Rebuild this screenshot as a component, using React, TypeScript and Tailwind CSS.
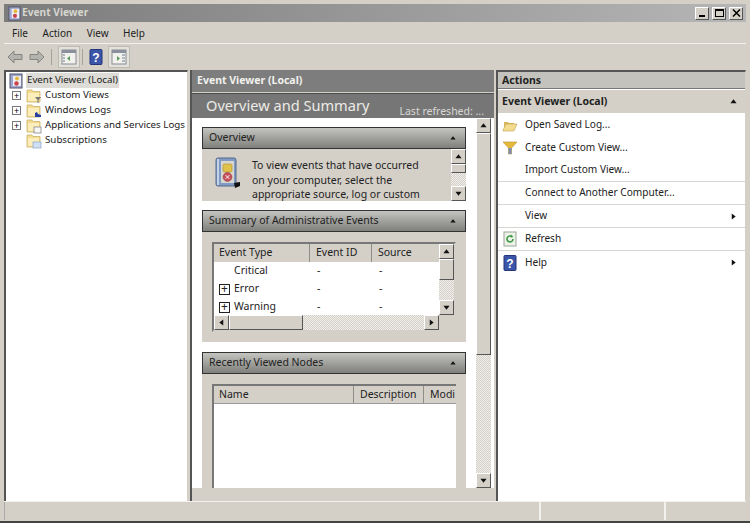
import React from "react";

const FONT = "font-['Noto_Sans','DejaVu_Sans',sans-serif]";
const BEVEL = "border border-t-white border-l-white border-r-[#555] border-b-[#555] bg-[#d4d0c8]";
const TRACK = "bg-[repeating-conic-gradient(#d4d0c8_0%_25%,#efeeea_0%_50%)] bg-size-[2px_2px]";

function Arrow({ dir, size = 7 }: { dir: "up" | "down" | "left" | "right"; size?: number }) {
  const pts = {
    up: "4,1.5 7.5,6 0.5,6",
    down: "0.5,2 7.5,2 4,6.5",
    left: "6,0.5 6,7.5 1.5,4",
    right: "2,0.5 2,7.5 6.5,4",
  }[dir];
  return (
    <svg width={size} height={size} viewBox="0 0 8 8" className="shrink-0">
      <polygon points={pts} fill="#111" />
    </svg>
  );
}

function ScrollBtn({ dir }: { dir: "up" | "down" | "left" | "right" }) {
  return (
    <div className={`w-[15px] h-[15px] shrink-0 flex items-center justify-center ${BEVEL}`}>
      <Arrow dir={dir} />
    </div>
  );
}

function VScroll({ thumb }: { thumb: number }) {
  return (
    <div className="w-[15px] h-full shrink-0 flex flex-col">
      <ScrollBtn dir="up" />
      <div className={`shrink-0 ${BEVEL}`} style={{ height: thumb }} />
      <div className={`flex-1 ${TRACK}`} />
      <ScrollBtn dir="down" />
    </div>
  );
}

function FolderIcon({ badge }: { badge?: React.ReactNode }) {
  return (
    <svg width="17" height="16" viewBox="0 0 17 16" className="shrink-0">
      <path d="M1 2h5l1 1.5h7v10.5H1z" fill="#f3dc8f" stroke="#c9b26a" strokeWidth="0.8" />
      <rect x="2" y="5" width="11" height="8" fill="#fbeebb" />
      {badge}
    </svg>
  );
}

function LogIcon({ size = 16 }: { size?: number }) {
  return (
    <svg width={size} height={size} viewBox="0 0 16 16" className="shrink-0">
      <rect x="2" y="1" width="12" height="14" fill="#9fa6cf" stroke="#55556b" strokeWidth="1" />
      <rect x="5" y="3" width="8" height="10" fill="#ededf2" />
      <circle cx="9" cy="5.5" r="2" fill="#e5b93c" />
      <circle cx="8.5" cy="10.5" r="2.2" fill="#c9424a" />
    </svg>
  );
}

function BookIcon() {
  return (
    <svg width="28" height="34" viewBox="0 0 28 34" className="shrink-0">
      <rect x="2" y="2" width="20" height="28" rx="2" fill="#7f9ac4" stroke="#56688c" />
      <path d="M4 3v26" stroke="#c4d2e8" strokeWidth="2" />
      <rect x="7" y="5" width="13" height="22" fill="#d9d6ce" />
      <rect x="9" y="8" width="9" height="8" rx="1.5" fill="#e0c14a" stroke="#a98f2c" strokeWidth="0.6" />
      <circle cx="13.5" cy="21" r="4.4" fill="#c8505a" stroke="#8f3039" strokeWidth="0.6" />
      <path d="M11.7 19.2l3.6 3.6M15.3 19.2l-3.6 3.6" stroke="#fff" strokeWidth="1" />
      <path d="M20 27l6-1v4l-5 2z" fill="#111" />
    </svg>
  );
}

function HelpIcon({ size = 16 }: { size?: number }) {
  return (
    <svg width={size} height={size} viewBox="0 0 16 16" className="shrink-0">
      <rect x="2" y="0.5" width="12" height="15" rx="1" fill="#3b55a8" stroke="#24357a" />
      <text x="8" y="12.5" textAnchor="middle" fontSize="12" fontWeight="700" fill="#fff" fontFamily="Liberation Sans, sans-serif">?</text>
    </svg>
  );
}

function NavArrow({ flip }: { flip?: boolean }) {
  return (
    <svg width="16" height="16" viewBox="0 0 16 16" className={flip ? "scale-x-[-1]" : ""}>
      <path d="M1 8l6-6v3.5h8v5H7V14z" fill="#b4b4ae" stroke="#85857f" />
    </svg>
  );
}

function PanelIcon({ right }: { right?: boolean }) {
  return (
    <svg width="16" height="16" viewBox="0 0 16 16">
      <rect x="1" y="1" width="14" height="14" fill="#f1f1ee" stroke="#8b8b90" />
      <rect x="1" y="1" width="14" height="3" fill="#8a8f9c" />
      <path d={right ? "M6 7v5l3-2.5z" : "M9 7v5l-3-2.5z"} fill="#5b9a5c" />
      <path d={right ? "M11 6h3M11 9h3M11 12h3" : "M2 6h2M2 9h2M2 12h2"} stroke="#6c7d96" />
    </svg>
  );
}

function ToolButton({ children, pressed }: { children: React.ReactNode; pressed?: boolean }) {
  return (
    <div className={`w-[22px] h-[22px] flex items-center justify-center ${pressed ? "bg-[#e3e1dc] border border-[#bdbab2]" : ""}`}>
      {children}
    </div>
  );
}

function WinButton({ children }: { children: React.ReactNode }) {
  return <div className={`w-[14px] h-[13px] flex items-center justify-center ${BEVEL}`}>{children}</div>;
}

function TreeRow({ icon, label, expand }: { icon: React.ReactNode; label: string; expand?: boolean }) {
  return (
    <div className="h-[15px] flex items-center pl-[6px] whitespace-nowrap">
      <div className="w-[14px] shrink-0">
        {expand && (
          <div className="w-[9px] h-[9px] border border-[#777] bg-white flex items-center justify-center text-[9px] leading-none text-black">
            +
          </div>
        )}
      </div>
      <div className="w-[19px] shrink-0 flex">{icon}</div>
      <span>{label}</span>
    </div>
  );
}

function SectionHeader({ title }: { title: string }) {
  return (
    <div className="h-[22px] shrink-0 flex items-center justify-between pl-[6px] pr-[9px] bg-linear-to-b from-[#c4c4c0] to-[#7f7f7b] border border-[#333] text-[#222]">
      <span>{title}</span>
      <Arrow dir="up" size={6} />
    </div>
  );
}

function ColHead({ label, width, first }: { label: string; width: string; first?: boolean }) {
  return (
    <div className={`${width} ${first ? "pl-[5px]" : "pl-[6px]"} shrink-0 h-full flex items-center border-r border-r-[#8f8d87] overflow-hidden whitespace-nowrap`}>
      {label}
    </div>
  );
}

function EventRow({ name, plus }: { name: string; plus?: boolean }) {
  return (
    <div className="h-[18px] flex items-center">
      <div className="w-[96px] shrink-0 flex items-center pl-[5px]">
        <div className="w-[15px] shrink-0">
          {plus && (
            <div className="w-[11px] h-[11px] border border-[#222] flex items-center justify-center text-[12px] leading-none">
              +
            </div>
          )}
        </div>
        <span>{name}</span>
      </div>
      <div className="w-[62px] shrink-0 pl-[7px]">-</div>
      <div className="pl-[7px]">-</div>
    </div>
  );
}

function ActionRow({ label, icon, more, sep }: { label: string; icon?: React.ReactNode; more?: boolean; sep?: boolean }) {
  return (
    <div className={`h-[23px] flex items-center ${sep ? "border-b border-[#d8d6d0]" : ""}`}>
      <div className="w-[27px] shrink-0 pl-[4px] flex">{icon}</div>
      <span className="flex-1">{label}</span>
      {more && <div className="pr-[8px] flex"><Arrow dir="right" /></div>}
    </div>
  );
}

export default function App() {
  return (
    <div className={`w-[750px] h-[523px] overflow-hidden bg-[#d4d0c8] flex flex-col px-[4px] pt-[4px] border-b-2 border-b-[#444] text-[10.5px] text-[#222] ${FONT}`}>
      {/* title bar */}
      <div className="h-[18px] shrink-0 flex items-center pl-[3px] pr-[3px] bg-linear-to-r from-[#7c7c7c] to-[#b6b6b6]">
        <LogIcon size={15} />
        <span className="font-bold text-[10.2px] text-[#d6d6d0]">Event Viewer</span>
        <div className="ml-auto flex gap-[3px]">
          <WinButton><div className="w-[6px] h-[2px] bg-black mt-[6px]" /></WinButton>
          <WinButton><div className="w-[9px] h-[8px] border border-black border-t-2" /></WinButton>
          <WinButton>
            <svg width="9" height="8" viewBox="0 0 9 8"><path d="M1 0.5l7 7M8 0.5l-7 7" stroke="#000" strokeWidth="1.5" /></svg>
          </WinButton>
        </div>
      </div>

      {/* menu */}
      <div className="h-[22px] shrink-0 flex items-center gap-[14.5px] pl-[8px] pt-px text-[10px] border-b border-b-[#f2f1ee]">
        <span>File</span>
        <span>Action</span>
        <span>View</span>
        <span>Help</span>
      </div>

      {/* toolbar */}
      <div className="h-[25px] shrink-0 flex items-center pl-[3px] gap-[1px]">
        <NavArrow />
        <div className="w-[4px]" />
        <NavArrow flip />
        <div className="w-px h-[16px] bg-[#a5a29b] mx-[5px]" />
        <ToolButton pressed><PanelIcon /></ToolButton>
        <div className="w-px h-[16px] bg-[#a5a29b] mx-px" />
        <ToolButton><HelpIcon /></ToolButton>
        <ToolButton pressed><PanelIcon right /></ToolButton>
      </div>

      {/* panes */}
      <div className="h-[431px] shrink-0 mt-[1px] flex gap-[2px]">
        {/* tree */}
        <div className="w-[184px] shrink-0 bg-white border-t-2 border-l-2 border-t-[#555] border-l-[#555] border-r border-r-[#d4d0c8] pt-px text-[9.75px]">
          <div className="h-[15px] flex items-center pl-[2px]">
            <LogIcon />
            <span className="ml-[2px] bg-[#dedcd6] px-[1px]">Event Viewer (Local)</span>
          </div>
          <TreeRow expand label="Custom Views" icon={<FolderIcon badge={<path d="M9 9h6l-2.5 3v3h-1v-3z" fill="#777" />} />} />
          <TreeRow expand label="Windows Logs" icon={<FolderIcon badge={<path d="M9 14V10l2-1 1 2 3 1v2z" fill="#2440a0" />} />} />
          <TreeRow expand label="Applications and Services Logs" icon={<FolderIcon badge={<rect x="8" y="9" width="7" height="6" fill="#f7f7f7" stroke="#777" strokeWidth="0.7" />} />} />
          <TreeRow label="Subscriptions" icon={<FolderIcon badge={<rect x="7" y="9" width="8" height="6" fill="#cfe0f5" stroke="#8aa4c8" strokeWidth="0.7" />} />} />
        </div>

        {/* centre */}
        <div className="w-[304px] shrink-0 flex flex-col border-l-2 border-l-[#555]">
          <div className="h-[22px] shrink-0 flex items-center pl-[5px] bg-[#7d7d7d] font-bold text-[#f1f1ee]">
            Event Viewer (Local)
          </div>
          <div className="h-[25px] shrink-0 mt-px flex items-center justify-between pl-[14px] pr-[10px] bg-[#767676] border-t border-t-[#4d4d4d]">
            <span className="text-[14.6px] text-[#ecebe6]">Overview and Summary</span>
            <span className="self-end leading-[13px] text-[#d8d8d4]">Last refreshed: ...</span>
          </div>
          <div className="flex-1 min-h-0 flex flex-col">
            <div className="flex-1 min-h-0 flex bg-white">
              <div className="w-[284px] shrink-0 overflow-hidden px-[10px] pt-[9px] flex flex-col">
                <SectionHeader title="Overview" />
                <div className="h-[52px] shrink-0 flex bg-[#d4d0c8] overflow-hidden">
                  <div className="w-[50px] shrink-0 flex justify-center pt-[7px] pl-[2px]">
                    <BookIcon />
                  </div>
                  <div className="flex-1 min-w-0 pt-[9px]">
                    <p className="w-[176px] leading-[14.5px]">
                      To view events that have occurred on your computer, select the appropriate source, log or custom
                    </p>
                  </div>
                  <VScroll thumb={9} />
                </div>

                <div className="h-[9px] shrink-0" />
                <SectionHeader title="Summary of Administrative Events" />
                <div className="h-[110px] shrink-0 bg-[#d4d0c8] p-[10px]">
                  <div className="h-[90px] flex flex-col border-2 border-[#777] border-r-[#d4d0c8] border-b-[#d4d0c8]">
                    <div className="flex-1 min-h-0 flex">
                      <div className="flex-1 min-w-0 flex flex-col">
                        <div className="h-[18px] shrink-0 flex items-center">
                          <ColHead first label="Event Type" width="w-[96px]" />
                          <ColHead label="Event ID" width="w-[62px]" />
                          <div className="pl-[6px]">Source</div>
                        </div>
                        <div className="flex-1 bg-white overflow-hidden">
                          <EventRow name="Critical" />
                          <EventRow name="Error" plus />
                          <EventRow name="Warning" plus />
                        </div>
                      </div>
                      <VScroll thumb={21} />
                    </div>
                    <div className="h-[15px] shrink-0 flex">
                      <ScrollBtn dir="left" />
                      <div className={`w-[74px] shrink-0 ${BEVEL}`} />
                      <div className={`flex-1 ${TRACK}`} />
                      <ScrollBtn dir="right" />
                      <div className="w-[15px]" />
                    </div>
                  </div>
                </div>

                <div className="h-[10px] shrink-0" />
                <SectionHeader title="Recently Viewed Nodes" />
                <div className="flex-1 bg-[#d4d0c8] px-[10px] pt-[10px]">
                  <div className="h-full flex flex-col border-t-2 border-l-2 border-[#777] bg-white">
                    <div className="h-[18px] shrink-0 flex items-center bg-[#d4d0c8] border-b border-b-[#999]">
                      <ColHead first label="Name" width="w-[140px]" />
                      <ColHead label="Description" width="w-[70px]" />
                      <div className="pl-[6px] overflow-hidden whitespace-nowrap">Modi</div>
                    </div>
                  </div>
                </div>
              </div>
              <VScroll thumb={222} />
            </div>
            <div className="h-[13px] shrink-0 bg-[#d4d0c8]" />
          </div>
        </div>

        {/* actions */}
        <div className="flex-1 min-w-0 flex flex-col bg-white border-l-2 border-l-[#555] border-t-2 border-t-[#555] border-r border-r-[#d4d0c8]">
          <div className="h-[17px] shrink-0 flex items-center pl-[4px] pt-px bg-[#c4c2bc] font-bold border-b border-b-[#777]">
            Actions
          </div>
          <div className="h-[23px] shrink-0 flex items-center justify-between pl-[4px] pr-[8px] bg-[#d4d0c8] font-bold mt-px">
            <span>Event Viewer (Local)</span>
            <Arrow dir="up" />
          </div>
          <div className="text-[10.1px]">
            <ActionRow
              label="Open Saved Log..."
              icon={
                <svg width="16" height="16" viewBox="0 0 16 16">
                  <path d="M2 5h4l1 1h5v2H5L2 13z" fill="#d9b860" />
                  <path d="M1 13l3-6h11l-3 7H1z" fill="#f3dc8f" stroke="#c2a252" strokeWidth="0.6" />
                </svg>
              }
            />
            <ActionRow
              label="Create Custom View..."
              icon={
                <svg width="16" height="16" viewBox="0 0 16 16">
                  <path d="M1 2h14L9.5 8v6h-3V8z" fill="#e5b93c" stroke="#b78f24" strokeWidth="0.6" />
                  <path d="M6.5 8h3v6h-3z" fill="#7d8fb0" />
                </svg>
              }
            />
            <ActionRow label="Import Custom View..." sep />
            <ActionRow label="Connect to Another Computer..." sep />
            <ActionRow label="View" more sep />
            <ActionRow
              label="Refresh"
              sep
              icon={
                <svg width="16" height="16" viewBox="0 0 16 16">
                  <rect x="2" y="1" width="12" height="14" fill="#eef3ea" stroke="#9aa596" />
                  <path d="M11 8a3 3 0 1 1-1-2.3" fill="none" stroke="#3f9a45" strokeWidth="1.6" />
                  <path d="M9 3.5l2.5 2.5-3 .5z" fill="#3f9a45" />
                </svg>
              }
            />
            <ActionRow label="Help" more icon={<HelpIcon />} />
          </div>
        </div>
      </div>

      {/* status bar */}
      <div className="h-[19px] shrink-0 flex border-t border-t-[#f2f1ee]">
        <div className="w-[537px] border-r-2 border-r-[#f2f1ee] border-l border-l-[#aaa]" />
        <div className="w-[125px] border-r-2 border-r-[#f2f1ee]" />
        <div className="flex-1" />
      </div>
    </div>
  );
}
